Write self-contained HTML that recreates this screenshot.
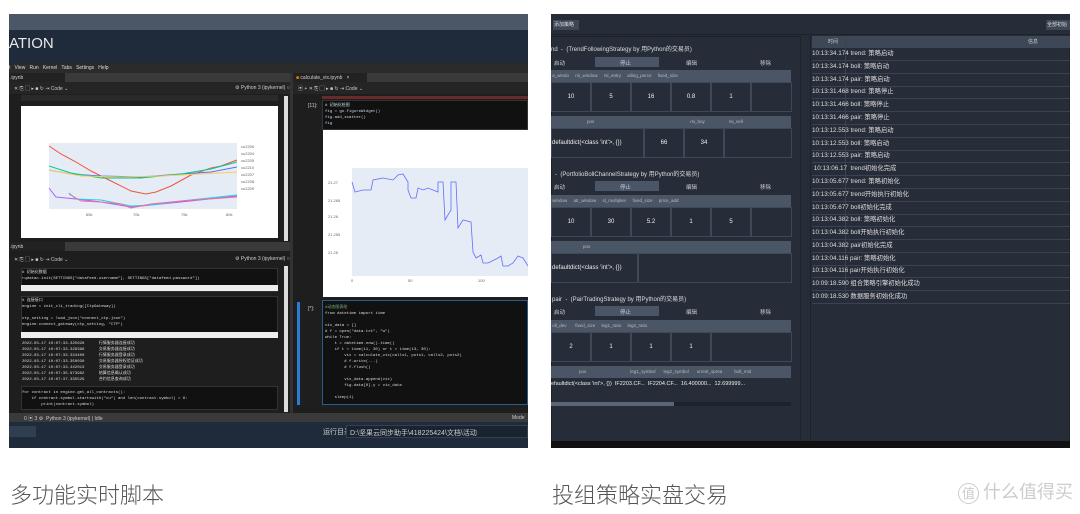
<!DOCTYPE html>
<html><head><meta charset="utf-8"><style>
*{margin:0;padding:0;box-sizing:border-box}
body{width:1080px;height:514px;background:#fff;position:relative;overflow:hidden;font-family:"Liberation Sans","Noto Sans CJK SC",sans-serif}
.a{position:absolute}
.t{font-size:5px;color:#ccc;white-space:nowrap}
.code{font-family:"Liberation Mono",monospace;font-size:4px;color:#ddd;line-height:6px;white-space:pre}
.cap{font-size:22px;color:#555;font-weight:300;font-family:"Noto Sans CJK SC",sans-serif}
.lr{position:absolute;left:812px;width:258px;height:12.8px;border-bottom:1px solid #3a4350;font-size:6.3px;color:#ddd;line-height:12px;font-family:"Liberation Sans","Noto Sans CJK SC",sans-serif;white-space:nowrap}
.th{position:absolute;background:#4a5566;font-size:4.5px;color:#bbb;line-height:12px;white-space:nowrap}
.cell{position:absolute;border:1px solid #3f4856;font-size:6px;color:#eee;text-align:center;white-space:nowrap}
</style></head><body>
<!-- LEFT IMAGE -->
<div class="a" style="left:9px;top:14px;width:519px;height:434px;background:#1e1e1e"></div>
<div class="a" style="left:9px;top:14px;width:519px;height:16px;background:#4b5767"></div>
<div class="a" style="left:9px;top:30px;width:519px;height:33px;background:#1f2b3a"></div>
<div class="a" style="left:9px;top:35px;font-size:15px;color:#e8e8e8">ATION</div>
<div class="a" style="left:9px;top:63px;width:519px;height:10px;background:#2b2b2b"></div>
<div class="a t" style="left:9px;top:65px;color:#ddd">t &nbsp; View &nbsp; Run &nbsp; Kernel &nbsp; Tabs &nbsp; Settings &nbsp; Help</div>
<div class="a" style="left:9px;top:73px;width:519px;height:9px;background:#3a3a3a"></div>
<div class="a" style="left:9px;top:73px;width:56px;height:9px;background:#222"></div>
<div class="a t" style="left:10px;top:75px">.ipynb</div>
<div class="a" style="left:293px;top:73px;width:74px;height:9px;background:#222"></div>
<div class="a t" style="left:296px;top:75px"><span style="color:#e80">■</span> calculate_vix.ipynb &nbsp; ×</div>
<div class="a" style="left:9px;top:82px;width:519px;height:12px;background:#252525"></div>
<div class="a t" style="left:14px;top:85px">✕ ⎘ ▢ ▸ ■ ↻ ⇥ Code ⌄</div>
<div class="a t" style="left:235px;top:85px">⚙ Python 3 (ipykernel) ○</div>
<div class="a t" style="left:298px;top:85px">▣ + ✕ ⎘ ▢ ▸ ■ ↻ ⇥ Code ⌄</div>
<div class="a" style="left:290px;top:73px;width:3px;height:349px;background:#333"></div>
<div class="a" style="left:21px;top:95px;width:257px;height:6px;background:#2a2a2a"></div>
<div class="a" style="left:21px;top:106px;width:257px;height:132px;background:#fff"></div>
<svg class="a" style="left:21px;top:106px" width="257" height="132">
<rect x="28" y="37" width="188" height="66" fill="#e5ecf6"/>
<polyline fill="none" stroke="#ef553b" stroke-width="1" points="28,40 40,48 55,56 70,65 90,75 110,85 125,88 135,86 150,80 170,69 190,62 200,60 216,54"/>
<polyline fill="none" stroke="#636efa" stroke-width="1" points="28,64 50,68 80,70 120,71 160,68 190,66 216,61"/>
<polyline fill="none" stroke="#00cc96" stroke-width="1" points="28,60 50,67 80,72 120,72 160,68 190,63 216,56"/>
<polyline fill="none" stroke="#fecb52" stroke-width="1" points="28,64 60,70 100,71 140,70 216,66"/>
<polyline fill="none" stroke="#ab63fa" stroke-width="1" points="28,82 35,91 55,93 80,96 110,101 130,99 160,96 216,90"/>
<polyline fill="none" stroke="#19d3f3" stroke-width="1" points="48,87 55,93 80,94 110,100 130,99 160,95 216,89"/>
<polyline fill="none" stroke="#ff6692" stroke-width="1" points="48,88 60,95 80,96 100,98 110,102 130,98 160,95 216,91"/>
<g font-size="4" fill="#666" font-family="Liberation Sans"><text x="65" y="110">65k</text><text x="112" y="110">70k</text><text x="160" y="110">75k</text><text x="205" y="110">80k</text>
<text x="220" y="42">cu2206</text><text x="220" y="49">cu2204</text><text x="220" y="56">cu2205</text><text x="220" y="63">cu2210</text><text x="220" y="70">cu2207</text><text x="220" y="77">cu2208</text><text x="220" y="84">cu2209</text></g>
</svg>
<div class="a" style="left:284px;top:96px;width:4px;height:145px;background:#ddd"></div>
<div class="a" style="left:9px;top:242px;width:281px;height:9px;background:#3a3a3a"></div>
<div class="a" style="left:9px;top:242px;width:56px;height:9px;background:#222"></div>
<div class="a t" style="left:10px;top:244px">.ipynb</div>
<div class="a t" style="left:14px;top:256px">✕ ⎘ ▢ ▸ ■ ↻ ⇥ Code ⌄</div>
<div class="a t" style="left:235px;top:256px">⚙ Python 3 (ipykernel) ○</div>
<div class="a" style="left:21px;top:268px;width:257px;height:24px;background:#111;border:1px solid #333"></div>
<div class="a code" style="left:22px;top:270px"># 初始化数据
rqdatac.init(SETTINGS["datafeed.username"], SETTINGS["datafeed.password"])</div>
<div class="a" style="left:21px;top:285px;width:257px;height:6px;background:#eee"></div>
<div class="a" style="left:21px;top:296px;width:257px;height:42px;background:#111;border:1px solid #333"></div>
<div class="a code" style="left:22px;top:298px"># 连接接口
engine = init_cli_trading([CtpGateway])

ctp_setting = load_json("connect_ctp.json")
engine.connect_gateway(ctp_setting, "CTP")</div>
<div class="a" style="left:21px;top:332px;width:257px;height:6px;background:#eee"></div>
<div class="a code" style="left:22px;top:341px">2022-03-17 10:07:33.325628      行情服务器连接成功
2022-03-17 10:07:33.328396      交易服务器连接成功
2022-03-17 10:07:33.334400      行情服务器登录成功
2022-03-17 10:07:33.350030      交易服务器授权验证成功
2022-03-17 10:07:33.442013      交易服务器登录成功
2022-03-17 10:07:35.973982      结算信息确认成功
2022-03-17 10:07:37.335529      合约信息查询成功</div>
<div class="a" style="left:21px;top:386px;width:257px;height:24px;background:#111;border:1px solid #333"></div>
<div class="a code" style="left:22px;top:390px">for contract in engine.get_all_contracts():
    if contract.symbol.startswith("cu") and len(contract.symbol) > 6:
        print(contract.symbol)</div>
<div class="a" style="left:284px;top:266px;width:4px;height:146px;background:#ddd"></div>
<!-- right notebook -->
<div class="a" style="left:322px;top:96px;width:206px;height:3px;background:#6b2a2a"></div>
<div class="a t" style="left:308px;top:103px">[11]:</div>
<div class="a" style="left:322px;top:100px;width:206px;height:30px;background:#111;border:1px solid #333"></div>
<div class="a code" style="left:325px;top:103px;color:#cde"># 初始化绘图
fig = go.FigureWidget()
fig.add_scatter()
fig</div>
<div class="a" style="left:323px;top:130px;width:205px;height:167px;background:#fff"></div>
<svg class="a" style="left:323px;top:130px" width="205" height="167">
<rect x="29" y="38" width="176" height="108" fill="#e5ecf6"/>
<polyline fill="none" stroke="#636efa" stroke-width="0.8" points="29,52 32,62 40,60 48,60 50,50 60,48 70,50 75,45 80,44 85,52 85,60 88,68 93,68 95,58 100,60 105,58 110,60 115,62 115,52 120,52 122,90 128,80 128,52 133,52 135,98 140,90 148,92 150,122 153,128 158,125 160,133 165,133 175,128 178,126 180,136 185,136 190,133 195,126 200,128 205,136"/>
<g font-size="4" fill="#666" font-family="Liberation Sans"><text x="5" y="54">21.27</text><text x="5" y="72">21.265</text><text x="5" y="88">21.26</text><text x="5" y="106">21.255</text><text x="5" y="124">21.25</text><text x="28" y="152">0</text><text x="85" y="152">50</text><text x="155" y="152">100</text></g>
</svg>
<div class="a" style="left:297px;top:302px;width:3px;height:103px;background:#2a7bd4"></div>
<div class="a t" style="left:308px;top:306px">[*]:</div>
<div class="a" style="left:322px;top:300px;width:206px;height:105px;background:#111;border:1px solid #2a5a90"></div>
<div class="a code" style="left:325px;top:305px"><span style="color:#7a7">#动态图表绘</span>
from datetime import time

vix_data = []
# f = open("data.txt", "w")
while True:
    t = datetime.now().time()
    if t < time(11, 30) or t > time(13, 30):
        vix = calculate_vix(calls1, puts1, calls2, puts2)
        # f.write(...)
        # f.flush()

        vix_data.append(vix)
        fig.data[0].y = vix_data

    sleep(1)</div>
<div class="a" style="left:9px;top:413px;width:519px;height:9px;background:#3a3a3a"></div>
<div class="a t" style="left:24px;top:415px">0 ▣ 3 ⚙ &nbsp;Python 3 (ipykernel) | Idle</div>
<div class="a t" style="left:512px;top:415px">Mode</div>
<div class="a" style="left:9px;top:422px;width:519px;height:26px;background:#1f2b3a"></div>
<div class="a" style="left:9px;top:426px;width:27px;height:11px;background:#2f3e50"></div>
<div class="a" style="left:323px;top:427px;font-size:7px;color:#ccc">运行目录</div>
<div class="a" style="left:346px;top:425px;width:182px;height:13px;background:#1a2431;border:1px solid #34404f;font-size:7px;color:#ccc;padding:2px 3px">D:\坚果云同步助手\418225424\文档\活动</div>

<!-- RIGHT IMAGE -->
<div class="a" style="left:551px;top:14px;width:519px;height:434px;background:#262d38"></div>
<div class="a" style="left:551px;top:14px;width:519px;height:21px;background:#262d38;border-bottom:1px solid #1d232c"></div>
<div class="a" style="left:553px;top:20px;width:26px;height:10px;background:#3e4756;font-size:5px;color:#ddd;line-height:10px;padding-left:1px">添加策略</div>
<div class="a" style="left:1046px;top:20px;width:24px;height:10px;background:#3e4756;font-size:5px;color:#ddd;line-height:10px;padding-left:1px">全部初始</div>
<div class="a" style="left:551px;top:36px;width:250px;height:410px;border:1px solid #1d232c"></div>
<div class="a" style="left:810px;top:36px;width:260px;height:410px;border:1px solid #1d232c"></div>
<div class="a" style="left:551px;top:441px;width:519px;height:7px;background:#111"></div>
<!-- log -->
<div class="a" style="left:812px;top:36px;width:258px;height:12px;background:#3e4756;font-size:5px;color:#ccc;line-height:12px"><span style="margin-left:16px">时间</span><span style="margin-left:190px">信息</span></div>
<div class="a" style="left:845px;top:36px;width:1px;height:264px;background:#3a4350"></div>
<div class="lr" style="top:48px">10:13:34.174 trend: 策略启动</div>
<div class="lr" style="top:61px">10:13:34.174 boll: 策略启动</div>
<div class="lr" style="top:74px">10:13:34.174 pair: 策略启动</div>
<div class="lr" style="top:86px">10:13:31.468 trend: 策略停止</div>
<div class="lr" style="top:99px">10:13:31.466 boll: 策略停止</div>
<div class="lr" style="top:112px">10:13:31.466 pair: 策略停止</div>
<div class="lr" style="top:125px">10:13:12.553 trend: 策略启动</div>
<div class="lr" style="top:138px">10:13:12.553 boll: 策略启动</div>
<div class="lr" style="top:150px">10:13:12.553 pair: 策略启动</div>
<div class="lr" style="top:163px">&nbsp;10:13:06.17 &nbsp;trend初始化完成</div>
<div class="lr" style="top:176px">10:13:05.677 trend: 策略初始化</div>
<div class="lr" style="top:189px">10:13:05.677 trend开始执行初始化</div>
<div class="lr" style="top:202px">10:13:05.677 boll初始化完成</div>
<div class="lr" style="top:214px">10:13:04.382 boll: 策略初始化</div>
<div class="lr" style="top:227px">10:13:04.382 boll开始执行初始化</div>
<div class="lr" style="top:240px">10:13:04.382 pair初始化完成</div>
<div class="lr" style="top:253px">10:13:04.116 pair: 策略初始化</div>
<div class="lr" style="top:265px">10:13:04.116 pair开始执行初始化</div>
<div class="lr" style="top:278px">10:09:18.590 组合策略引擎初始化成功</div>
<div class="lr" style="top:291px">10:09:18.530 数据服务初始化成功</div>
<!-- strategy 1 -->
<div class="a" style="left:551px;top:44px;font-size:6px;color:#ddd">nd &nbsp;- &nbsp;(TrendFollowingStrategy by 用Python的交易员)</div>
<div class="a" style="left:595px;top:57px;width:64px;height:10px;background:#4a5566"></div>
<div class="a t" style="left:554px;top:59px;font-size:5.5px">启动</div><div class="a t" style="left:620px;top:59px;font-size:5.5px">停止</div><div class="a t" style="left:686px;top:59px;font-size:5.5px">编辑</div><div class="a t" style="left:760px;top:59px;font-size:5.5px">移除</div>
<div class="th" style="left:551px;top:70px;width:240px">&nbsp;a_windo &nbsp; &nbsp; rsi_window &nbsp; &nbsp; rsi_entry &nbsp; &nbsp; ailing_perce &nbsp; &nbsp; fixed_size</div>
<div class="cell" style="left:551px;top:82px;width:40px;height:30px;line-height:28px">10</div>
<div class="cell" style="left:591px;top:82px;width:40px;height:30px;line-height:28px">5</div>
<div class="cell" style="left:631px;top:82px;width:40px;height:30px;line-height:28px">16</div>
<div class="cell" style="left:671px;top:82px;width:40px;height:30px;line-height:28px">0.8</div>
<div class="cell" style="left:711px;top:82px;width:40px;height:30px;line-height:28px">1</div>
<div class="cell" style="left:751px;top:82px;width:41px;height:30px"></div>
<div class="th" style="left:551px;top:116px;width:240px"><span style="margin-left:36px">pos</span><span style="margin-left:96px">rsi_buy</span><span style="margin-left:24px">rsi_sell</span></div>
<div class="cell" style="left:551px;top:128px;width:93px;height:30px;line-height:28px;text-align:left">defaultdict(&lt;class 'int'&gt;, {})</div>
<div class="cell" style="left:644px;top:128px;width:40px;height:30px;line-height:28px">66</div>
<div class="cell" style="left:684px;top:128px;width:40px;height:30px;line-height:28px">34</div>
<div class="cell" style="left:724px;top:128px;width:68px;height:30px"></div>
<!-- strategy 2 -->
<div class="a" style="left:555px;top:169px;font-size:6px;color:#ddd">- &nbsp;(PortfolioBollChannelStrategy by 用Python的交易员)</div>
<div class="a" style="left:595px;top:181px;width:64px;height:10px;background:#4a5566"></div>
<div class="a t" style="left:554px;top:183px;font-size:5.5px">启动</div><div class="a t" style="left:620px;top:183px;font-size:5.5px">停止</div><div class="a t" style="left:686px;top:183px;font-size:5.5px">编辑</div><div class="a t" style="left:760px;top:183px;font-size:5.5px">移除</div>
<div class="th" style="left:551px;top:195px;width:240px">&nbsp;window &nbsp; &nbsp; atr_window &nbsp; &nbsp; sl_multiplier &nbsp; &nbsp; fixed_size &nbsp; &nbsp; price_add</div>
<div class="cell" style="left:551px;top:207px;width:40px;height:30px;line-height:28px">10</div>
<div class="cell" style="left:591px;top:207px;width:40px;height:30px;line-height:28px">30</div>
<div class="cell" style="left:631px;top:207px;width:40px;height:30px;line-height:28px">5.2</div>
<div class="cell" style="left:671px;top:207px;width:40px;height:30px;line-height:28px">1</div>
<div class="cell" style="left:711px;top:207px;width:40px;height:30px;line-height:28px">5</div>
<div class="cell" style="left:751px;top:207px;width:41px;height:30px"></div>
<div class="th" style="left:551px;top:241px;width:240px"><span style="margin-left:32px">pos</span></div>
<div class="cell" style="left:551px;top:253px;width:87px;height:30px;line-height:28px;text-align:left">defaultdict(&lt;class 'int'&gt;, {})</div>
<div class="cell" style="left:638px;top:253px;width:154px;height:30px"></div>
<!-- strategy 3 -->
<div class="a" style="left:552px;top:294px;font-size:6px;color:#ddd">pair &nbsp;- &nbsp;(PairTradingStrategy by 用Python的交易员)</div>
<div class="a" style="left:595px;top:306px;width:64px;height:10px;background:#4a5566"></div>
<div class="a t" style="left:554px;top:308px;font-size:5.5px">启动</div><div class="a t" style="left:620px;top:308px;font-size:5.5px">停止</div><div class="a t" style="left:686px;top:308px;font-size:5.5px">编辑</div><div class="a t" style="left:760px;top:308px;font-size:5.5px">移除</div>
<div class="th" style="left:551px;top:320px;width:240px">&nbsp;oll_dev &nbsp; &nbsp; &nbsp; fixed_size &nbsp; &nbsp; leg1_ratio &nbsp; &nbsp; leg2_ratio</div>
<div class="cell" style="left:551px;top:332px;width:40px;height:30px;line-height:28px">2</div>
<div class="cell" style="left:591px;top:332px;width:40px;height:30px;line-height:28px">1</div>
<div class="cell" style="left:631px;top:332px;width:40px;height:30px;line-height:28px">1</div>
<div class="cell" style="left:671px;top:332px;width:40px;height:30px;line-height:28px">1</div>
<div class="cell" style="left:711px;top:332px;width:81px;height:30px"></div>
<div class="th" style="left:551px;top:366px;width:240px"><span style="margin-left:28px">pos</span><span style="margin-left:44px">leg1_symbol</span><span style="margin-left:8px">leg2_symbol</span><span style="margin-left:8px">urrent_sprea</span><span style="margin-left:12px">boll_mid</span></div>
<div class="a" style="left:551px;top:381px;font-size:5.5px;color:#eee;white-space:nowrap">efaultdict(&lt;class 'int'&gt;, {}) &nbsp;IF2203.CF... &nbsp;IF2204.CF... &nbsp;16.400000... &nbsp;12.699999...</div>
<div class="a" style="left:551px;top:402px;width:240px;height:4px;background:#1d232c"></div>
<div class="a" style="left:551px;top:402px;width:123px;height:4px;background:#5a6676"></div>
<!-- captions -->
<div class="a cap" style="left:10px;top:478px">多功能实时脚本</div>
<div class="a cap" style="left:552px;top:478px">投组策略实盘交易</div>
<div class="a" style="left:958px;top:478px;font-size:18px;color:#ccc;font-family:'Noto Sans CJK SC',sans-serif;white-space:nowrap"><span style="display:inline-block;width:21px;height:21px;border:1.5px solid #ccc;border-radius:50%;font-size:13px;text-align:center;line-height:18px;vertical-align:middle">值</span> 什么值得买</div>
</body></html>
